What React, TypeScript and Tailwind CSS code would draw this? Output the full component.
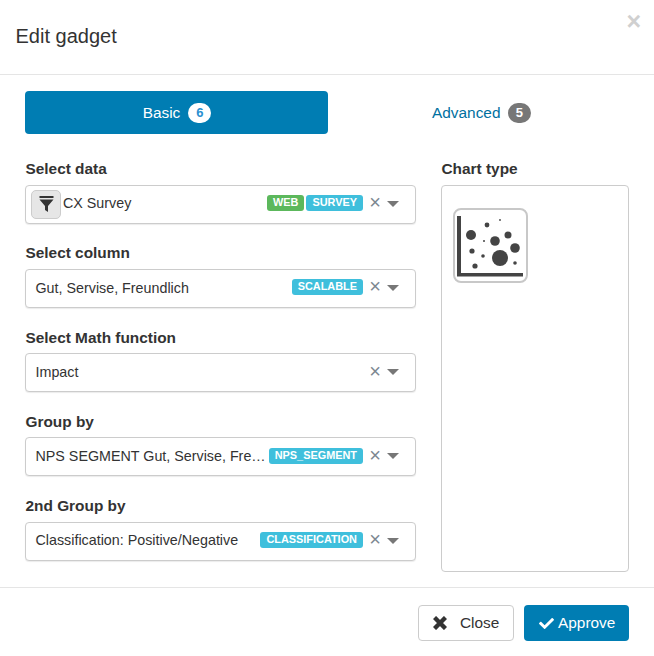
import { FaCheck } from "react-icons/fa"

function Badge({ color, children }: { color: string; children: string }) {
  return (
    <span className={`${color} rounded-[3px] h-4 px-[6px] text-[10.9px] leading-[14px] font-bold text-white whitespace-nowrap`}>
      {children}
    </span>
  )
}

function SelectBox({
  text,
  badges,
  icon,
}: {
  text: string
  badges?: { label: string; color: string }[]
  icon?: boolean
}) {
  return (
    <div className={`h-[39px] border border-[#ccc] rounded-[4px] flex items-center bg-white shadow-[0_1px_1px_rgba(0,0,0,0.08)] ${icon ? "pl-[5px]" : "pl-[9.5px]"}`}>
      {icon && (
        <span className="w-[30px] h-[29px] mr-[2px] shrink-0 bg-[#e6e6e6] border border-[#ccc] rounded-[5px] flex items-center justify-center">
          <svg width="15" height="16" viewBox="0 0 15 16" className="text-[#333]">
            <rect x="0.5" y="0" width="14" height="2" fill="currentColor" />
            <path d="M0.5 3.5h14L9 10V16L6 14V10z" fill="currentColor" />
          </svg>
        </span>
      )}
      <span className={`flex-1 min-w-0 whitespace-nowrap text-[14.3px] text-[#333] ${icon ? "mb-[1px]" : ""}`}>{text}</span>
      <span className="flex gap-[2px] mb-[2px] shrink-0">
        {badges?.map((b) => (
          <Badge key={b.label} color={b.color}>
            {b.label}
          </Badge>
        ))}
      </span>
      <span className="w-[24px] text-center shrink-0 text-[#7d8791] text-[20px] leading-none mb-[4px]">×</span>
      <span className="w-[28px] shrink-0 flex mb-[1px]">
        <span className="border-x-[6px] border-x-transparent border-t-[6px] border-t-[#777]" />
      </span>
    </div>
  )
}

function ChartIcon() {
  const dots = [
    [18, 27, 5],
    [34, 17, 2.4],
    [47, 12, 0.9],
    [55, 27, 3.5],
    [42, 33, 4.8],
    [31, 33, 1],
    [62, 40, 4.8],
    [19, 43, 2.6],
    [30, 48, 1.8],
    [47, 50, 8],
    [62, 55, 1.8],
    [22, 58, 2.6],
  ]
  return (
    <svg width="75" height="75" viewBox="0 0 75 75">
      <rect x="1" y="1" width="73" height="73" rx="7" fill="#fff" stroke="#c8c8c8" strokeWidth="2" />
      <rect x="4" y="8" width="4" height="60" fill="#444" />
      <rect x="4" y="65" width="66" height="3.5" fill="#444" />
      {dots.map(([cx, cy, r]) => (
        <circle key={`${cx}-${cy}`} cx={cx} cy={cy} r={r} fill="#444" />
      ))}
    </svg>
  )
}

const fields = [
  {
    label: "Select data",
    text: "CX Survey",
    icon: true,
    badges: [
      { label: "WEB", color: "bg-[#5cb85c]" },
      { label: "SURVEY", color: "bg-[#3fbfdc]" },
    ],
  },
  { label: "Select column", text: "Gut, Servise, Freundlich", badges: [{ label: "SCALABLE", color: "bg-[#3fbfdc]" }] },
  { label: "Select Math function", text: "Impact" },
  {
    label: "Group by",
    text: "NPS SEGMENT Gut, Servise, Fre…",
    badges: [{ label: "NPS_SEGMENT", color: "bg-[#3fbfdc]" }],
  },
  {
    label: "2nd Group by",
    text: "Classification: Positive/Negative",
    badges: [{ label: "CLASSIFICATION", color: "bg-[#3fbfdc]" }],
  },
]

export default function App() {
  return (
    <div className="w-[654px] h-[656px] bg-white font-['Liberation_Sans',Arial,sans-serif] text-[#333] overflow-hidden flex flex-col">
      {/* Header */}
      <header className="h-[75px] shrink-0 border-b border-[#e5e5e5] flex justify-between pl-[15.5px] pr-[13px]">
        <h1 className="text-[20px] leading-[72px]">Edit gadget</h1>
        <span className="text-[#d0d0d0] text-[25px] font-bold leading-none mt-[9px]">×</span>
      </header>

      <main className="flex-1 pl-[25px] pr-[23px] pt-4">
        {/* Tabs */}
        <div className="flex h-[43px]">
          <div className="w-[303px] shrink-0 bg-[#007db3] text-white rounded-[4px] flex items-center justify-center gap-[8px] pl-[1px] text-[15.4px]">
            <span className="pt-[1px]">Basic</span>
            <span className="bg-white text-[#2a8fd0] w-[23px] h-5 rounded-full text-[13px] font-bold flex items-center justify-center">6</span>
          </div>
          <div className="flex-1 text-[#00709f] flex items-center justify-center gap-[7.5px] text-[15.4px] pl-[4px]">
            <span className="pt-[1px]">Advanced</span>
            <span className="bg-[#777] text-white w-[23px] h-5 rounded-full text-[13px] font-bold flex items-center justify-center">5</span>
          </div>
        </div>

        <div className="flex gap-[25px] mt-[26px]">
          {/* Form fields */}
          <div className="w-[391px] flex flex-col gap-[20.55px]">
            {fields.map((f) => (
              <div key={f.label}>
                <div className="text-[15.4px] leading-[17px] font-bold mt-[0.15px] mb-[7.55px] pl-[0.5px]">{f.label}</div>
                <SelectBox text={f.text} badges={f.badges} icon={f.icon} />
              </div>
            ))}
          </div>

          {/* Chart type */}
          <div className="w-[188px] flex flex-col">
            <div className="text-[15.4px] leading-[17px] font-bold mb-[8px] pl-[0.5px]">Chart type</div>
            <div className="h-[387px] border border-[#ccc] rounded-[4px] pl-[11px] pt-[22px]">
              <ChartIcon />
            </div>
          </div>
        </div>
      </main>

      {/* Footer */}
      <footer className="h-[69px] shrink-0 border-t border-[#e5e5e5] flex justify-end gap-[10px] pr-[25px] pt-[17px]">
        <button className="w-[96px] h-[36px] border border-[#ccc] rounded-[4px] bg-white text-[15.4px] text-[#333] flex items-center pl-[14px] gap-[13px]">
          <svg width="14" height="14" viewBox="0 0 14 14" stroke="currentColor" strokeWidth="4.4">
            <path d="M1.5 1.5l11 11M12.5 1.5l-11 11" />
          </svg>
          Close
        </button>
        <button className="w-[105px] h-[36px] rounded-[4px] bg-[#007db3] text-white text-[15.4px] flex items-center pl-[15px] gap-[4px]">
          <FaCheck size={15} />
          Approve
        </button>
      </footer>
    </div>
  )
}
